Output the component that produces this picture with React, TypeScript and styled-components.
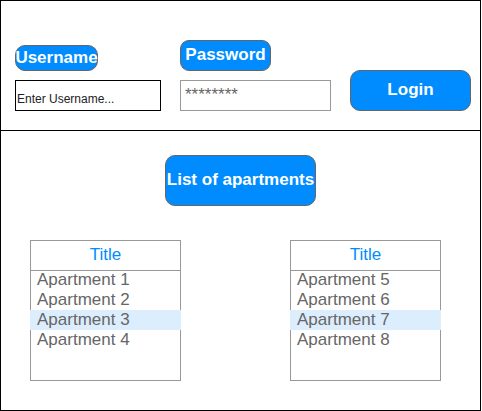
import React, { useState } from "react";
import styled, { createGlobalStyle, css } from "styled-components";

const blue = "#008cff";
const grey = "#999999";
const textGrey = "#666666";

const GlobalStyle = createGlobalStyle`
  *, *::before, *::after { box-sizing: border-box; }
  body {
    margin: 0;
    background: #ffffff;
    font-family: "Liberation Sans", Arial, sans-serif;
    font-size: 17px;
    line-height: 20px;
  }
  input, button { font: inherit; }
`;

const Frame = styled.div`
  min-height: 100vh;
  margin-right: 1px;
  border: 1px solid #000000;
`;

const LoginForm = styled.form`
  display: grid;
  grid-template-columns: 146fr 151fr 121fr;
  align-items: end;
  gap: 19px;
  padding: 39px 9px 19px 14px;
  border-bottom: 1px solid #000000;
`;

const Field = styled.div`
  display: flex;
  flex-direction: column;
  align-items: flex-start;
  gap: 9px;
`;

const filled = css`
  border: 1px solid #666666;
  background: ${blue};
  color: #ffffff;
  font-weight: bold;
  white-space: nowrap;
`;

const FieldLabel = styled.label<{ $roomy?: boolean }>`
  ${filled}
  display: flex;
  justify-content: center;
  width: ${(p) => (p.$roomy ? "91px" : "83px")};
  padding: ${(p) => (p.$roomy ? "4px 0 5px" : "2px 0")};
  border-radius: ${(p) => (p.$roomy ? "9px" : "10px")};
`;

const TextInput = styled.input<{ $muted?: boolean }>`
  width: 100%;
  height: 31px;
  border: 1px solid ${(p) => (p.$muted ? grey : "#000000")};
  border-radius: 0;
  background: #ffffff;
  color: ${(p) => (p.$muted ? textGrey : "#000000")};
  font-size: ${(p) => (p.$muted ? "17px" : "12px")};
  padding: ${(p) => (p.$muted ? "0 4px 2px" : "6px 1px 0")};
  outline: none;

  &::placeholder {
    color: #222222;
    opacity: 1;
  }
`;

const LoginButton = styled.button`
  ${filled}
  height: 41px;
  padding: 0 0 2px;
  border-radius: 10px;
  cursor: pointer;
`;

const Main = styled.main`
  display: flex;
  flex-direction: column;
  gap: 34px;
  padding: 24px 39px 29px 29px;
`;

const Heading = styled.h1`
  ${filled}
  align-self: center;
  display: flex;
  align-items: center;
  justify-content: center;
  width: 151px;
  height: 51px;
  margin: 0 0 0 10px;
  padding-bottom: 2px;
  border-radius: 10px;
  font-size: 17px;
`;

const Lists = styled.div`
  display: flex;
  justify-content: space-between;
`;

const Card = styled.section`
  width: 151px;
  min-height: 141px;
  border: 1px solid ${grey};
`;

const CardTitle = styled.h2`
  margin: 0;
  padding: 4px 0 5px;
  border-bottom: 1px solid ${grey};
  color: ${blue};
  font-size: 17px;
  font-weight: normal;
  text-align: center;
`;

const Items = styled.ul`
  margin: -1px -1px 0;
  padding: 0;
  list-style: none;
`;

const Item = styled.button<{ $selected: boolean }>`
  display: block;
  width: 100%;
  height: 20px;
  padding: 0 7px 2px;
  border: 0;
  background: ${(p) => (p.$selected ? "#dcedfd" : "transparent")};
  color: ${textGrey};
  text-align: left;
  cursor: pointer;
`;

interface ListProps {
  numbers: number[];
  initial: number;
}

function ApartmentList({ numbers, initial }: ListProps) {
  const [selected, setSelected] = useState(initial);
  return (
    <Card>
      <CardTitle>Title</CardTitle>
      <Items>
        {numbers.map((n) => (
          <li key={n}>
            <Item
              type="button"
              $selected={n === selected}
              aria-pressed={n === selected}
              onClick={() => setSelected(n)}
            >
              Apartment {n}
            </Item>
          </li>
        ))}
      </Items>
    </Card>
  );
}

export default function App() {
  return (
    <>
      <GlobalStyle />
      <Frame>
        <LoginForm onSubmit={(e) => e.preventDefault()}>
          <Field>
            <FieldLabel htmlFor="username">Username</FieldLabel>
            <TextInput id="username" type="text" placeholder="Enter Username..." />
          </Field>
          <Field>
            <FieldLabel htmlFor="password" $roomy>Password</FieldLabel>
            <TextInput id="password" type="text" defaultValue="********" $muted />
          </Field>
          <LoginButton type="submit">Login</LoginButton>
        </LoginForm>
        <Main>
          <Heading>List of apartments</Heading>
          <Lists>
            <ApartmentList numbers={[1, 2, 3, 4]} initial={3} />
            <ApartmentList numbers={[5, 6, 7, 8]} initial={7} />
          </Lists>
        </Main>
      </Frame>
    </>
  );
}
